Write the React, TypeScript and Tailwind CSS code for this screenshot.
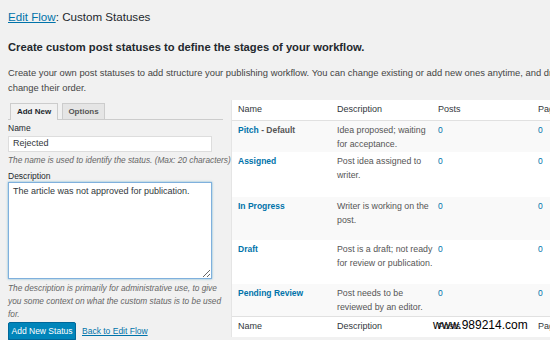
import React from 'react';

const rows = [
  { name: 'Pitch', extra: ' - Default', desc: ['Idea proposed; waiting', 'for acceptance.'], h: 'h-[31px]', alt: true },
  { name: 'Assigned', desc: ['Post idea assigned to', 'writer.'], h: 'h-[45px]', alt: false },
  { name: 'In Progress', desc: ['Writer is working on the', 'post.'], h: 'h-[43px]', alt: true },
  { name: 'Draft', desc: ['Post is a draft; not ready', 'for review or publication.'], h: 'h-[44px]', alt: false },
  { name: 'Pending Review', desc: ['Post needs to be', 'reviewed by an editor.'], h: 'h-[32px]', alt: true },
];

const HeadRow = ({ top }: { top?: boolean }) => (
  <div
    className={
      'flex h-[21px] items-center text-[9px] text-[#32373c] bg-white border-[#e1e1e1] ' +
      (top ? 'border-b' : 'border-t')
    }
  >
    <div className="w-[99px] pl-[6px]">Name</div>
    <div className="w-[101px] pl-[6px]">Description</div>
    <div className="w-[100px] pl-[6px]">Posts</div>
    <div className="w-[100px] pl-[6px]">Pages</div>
  </div>
);

export default function App() {
  return (
    <div className="relative w-[550px] h-[340px] overflow-hidden bg-[#f1f1f1] font-['Liberation_Sans',Arial,sans-serif] text-[#444]">
      <div className="px-2 pt-[8px]">
        <h1 className="text-[11.6px] leading-[18px] text-[#23282d]">
          <a className="text-[#0073aa] underline">Edit Flow</a>: Custom Statuses
        </h1>
        <h2 className="mt-[14px] text-[11.2px] leading-[14px] font-bold text-[#23282d]">
          Create custom post statuses to define the stages of your workflow.
        </h2>
        <p className="mt-[11px] w-[700px] whitespace-nowrap text-[9.4px] leading-[15px] text-[#444]">
          Create your own post statuses to add structure your publishing workflow. You can change existing or add new ones anytime, and drag and drop to
          <br />
          change their order.
        </p>
      </div>

      <div className="flex mt-[5px]">
        {/* left: add new form */}
        <div className="w-[223px] shrink-0 pl-2 pt-[4px]">
          <div className="flex items-end h-[16px] border-b border-[#ccc] pr-[6px]">
            <div className="ml-[2px] w-[48px] h-[17px] -mb-px flex items-center justify-center border border-b-0 border-[#ccc] bg-[#f1f1f1] text-[8px] font-bold text-[#23282d]">
              Add New
            </div>
            <div className="ml-[4px] w-[43px] h-[16px] flex items-center justify-center border border-b-0 border-[#ccc] bg-[#e5e5e5] text-[8px] font-bold text-[#555]">
              Options
            </div>
          </div>
          <div className="mt-[2px] text-[8.5px] leading-[12px] text-[#23282d]">Name</div>
          <div className="mt-[2px] w-[204px] h-[16px] bg-white border border-[#ddd] pl-[4px] flex items-center text-[9px] text-[#32373c]">
            Rejected
          </div>
          <div className="mt-[2px] text-[8.3px] leading-[12px] italic text-[#666] whitespace-nowrap">
            The name is used to identify the status. (Max: 20 characters)
          </div>
          <div className="mt-[4px] text-[8.5px] leading-[12px] text-[#23282d]">Description</div>
          <textarea
            readOnly
            defaultValue="The article was not approved for publication."
            className="block w-[204px] h-[97px] bg-white border border-[#7fb0dd] shadow-[0_0_2px_rgba(30,140,190,0.6)] px-[4px] py-[2px] text-[9px] leading-[12px] text-[#32373c] outline-none"
          />
          <div className="mt-[3px] text-[8.3px] leading-[13px] italic text-[#666] whitespace-nowrap">
            The description is primarily for administrative use, to give
            <br />
            you some context on what the custom status is to be used
            <br />
            for.
          </div>
          <div className="mt-[1px] flex items-center">
            <button className="h-[18px] w-[68px] rounded-[2px] bg-[#0085ba] border border-[#006799] text-[8.5px] text-white shadow-[0_1px_0_#006799]">
              Add New Status
            </button>
            <a className="ml-[6px] text-[8.5px] text-[#0073aa] underline">Back to Edit Flow</a>
          </div>
        </div>

        {/* right: statuses table */}
        <div className="ml-[8px] flex-1 overflow-hidden">
          <div className="w-[420px] bg-white border-l border-[#e5e5e5]">
            <HeadRow top />
            {rows.map((r) => (
              <div key={r.name} className={'flex text-[8.5px] leading-[13.5px] pt-[3px] ' + r.h + ' ' + (r.alt ? 'bg-[#f9f9f9]' : 'bg-white')}>
                <div className="w-[99px] pl-[6px]">
                  <span className="font-bold text-[#0073aa]">{r.name}</span>
                  {r.extra && <span className="font-bold text-[#555]">{r.extra}</span>}
                </div>
                <div className="w-[101px] pl-[6px] text-[8.8px] text-[#555] whitespace-nowrap">
                  {r.desc[0]}
                  <br />
                  {r.desc[1]}
                </div>
                <div className="w-[100px] pl-[6px] text-[#0073aa]">0</div>
                <div className="w-[100px] pl-[6px] text-[#0073aa]">0</div>
              </div>
            ))}
            <HeadRow />
          </div>
        </div>
      </div>

      <div className="absolute left-[433px] top-[318px] text-[12px] leading-[14px] text-black">www.989214.com</div>
    </div>
  );
}
